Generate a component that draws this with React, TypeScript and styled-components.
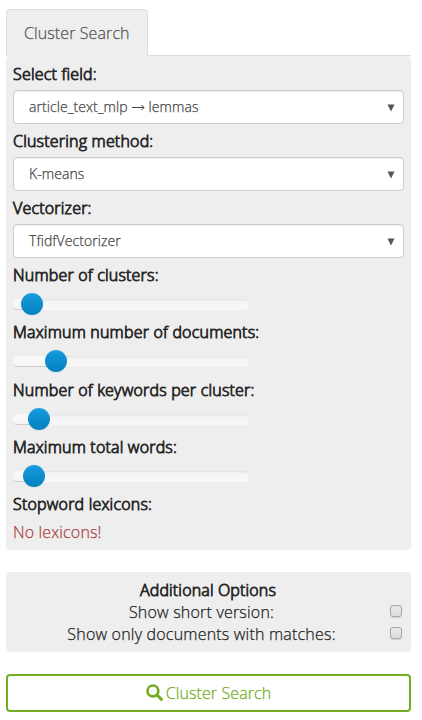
import React from 'react';
import styled, { createGlobalStyle } from 'styled-components';

const GlobalStyle = createGlobalStyle`
  * { box-sizing: border-box; }
  body {
    margin: 0;
    background: #fff;
    color: #222;
    font: 300 16px/22.86px "Open Sans", sans-serif;
    -webkit-text-stroke: 0.25px currentColor;
  }
`;

const Page = styled.main`
  width: 405px;
  margin-left: 6px;
  padding-top: 9px;
`;

const Tabs = styled.nav`
  display: flex;
  height: 47px;
  border-bottom: 1px solid #ddd;
`;

const Tab = styled.a`
  width: 142px;
  height: 47px;
  padding: 12px 17px;
  border: 1px solid #ddd;
  border-bottom-color: #eee;
  border-radius: 4px 4px 0 0;
  background: #eee;
  color: #555;
  letter-spacing: 0.1px;
`;

const Panel = styled.section`
  border-radius: 4px;
  background: #eee;
  box-shadow: 0 1px 2px rgba(0, 0, 0, 0.07);
`;

const Form = styled(Panel)`
  height: 493px;
  padding: 1px 7px 0;
`;

const Label = styled.div`
  height: 33px;
  padding-top: 6px;
  color: #2a2a2a;
  letter-spacing: 0.2px;
  -webkit-text-stroke: 0.85px #2a2a2a;
  white-space: nowrap;
`;

const SelectBox = styled.div`
  display: flex;
  align-items: center;
  justify-content: space-between;
  width: 391px;
  height: 34px;
  padding: 0 8px 0 15px;
  border: 1px solid #ccc;
  border-radius: 4px;
  background: #fff;
  box-shadow: inset 0 1px 1px rgba(0, 0, 0, 0.075);
  color: #444;
  font-size: 14px;
  letter-spacing: 0.06px;
`;

const LongArrow = styled.svg`
  width: 13px;
  height: 7px;
  margin: 0 4px 1px;
  fill: none;
  stroke: currentColor;
`;

const Arrow = styled.svg`
  width: 8px;
  height: 8px;
  margin-top: 1px;
  fill: #555;
`;

const SliderField = styled.div`
  height: 57.3px;
`;

const Track = styled.div`
  display: flex;
  align-items: center;
  width: 236px;
  height: 11px;
  margin-top: 8px;
  border-radius: 4px;
  background: linear-gradient(#f3f3f3, #f8f8f8);
  box-shadow: inset 0 1px 2px rgba(0, 0, 0, 0.08);
`;

const Selection = styled.div<{ $size: number }>`
  width: ${(p) => p.$size}px;
  height: 11px;
  border-radius: 4px;
  background: linear-gradient(#f9f9f9, #f5f5f5);
  box-shadow: inset 0 -1px 0 rgba(0, 0, 0, 0.15);
`;

const Handle = styled.div`
  flex: none;
  width: 22px;
  height: 22px;
  margin: -1px 0 0 -11px;
  border-radius: 50%;
  background: linear-gradient(#149bdf, #0480be);
  box-shadow: inset 0 1px 0 rgba(255, 255, 255, 0.1), 0 1px 2px rgba(0, 0, 0, 0.05);
`;

const Warning = styled.div`
  color: #a94442;
  letter-spacing: 0.15px;
  padding-top: 1px;
`;

const Options = styled(Panel)`
  height: 79px;
  margin-top: 23px;
  padding: 7px 8px 0 7px;
`;

const OptionsTitle = styled.div`
  height: 21px;
  text-align: center;
  color: #2a2a2a;
  letter-spacing: 0.15px;
  -webkit-text-stroke: 0.85px #2a2a2a;
`;

const Option = styled.label`
  display: grid;
  grid-template-columns: 1fr 13px;
  height: 22px;
  padding-top: 1px;
  text-align: center;
  letter-spacing: 0.2px;
`;

const Check = styled.input`
  appearance: none;
  width: 12px;
  height: 12px;
  margin: 4px 0 0;
  border: 1px solid #a9a9a9;
  border-radius: 3px;
  background: linear-gradient(#e9e9e9, #dcdcdc);
  box-shadow: 0 1px 1px rgba(0, 0, 0, 0.12);
`;

const SearchButton = styled.button`
  display: flex;
  align-items: center;
  justify-content: center;
  gap: 3px;
  width: 100%;
  height: 38px;
  margin-top: 23px;
  padding: 0;
  border: 2px solid #73ad21;
  border-radius: 4px;
  background: #fff;
  color: #73ad21;
  font: inherit;
  letter-spacing: 0.1px;
`;

const SearchIcon = styled.svg`
  width: 17px;
  height: 17px;
  margin-top: -2px;
`;

const selects = [
  {
    label: 'Select field:',
    value: (
      <>
        article_text_mlp
        <LongArrow viewBox="0 0 13 7">
          <path d="M0 3.5h12M9.5 1L12 3.5 9.5 6" />
        </LongArrow>
        lemmas
      </>
    ),
  },
  { label: 'Clustering method:', value: 'K-means' },
  { label: 'Vectorizer:', value: 'TfidfVectorizer' },
];

const sliders = [
  { label: 'Number of clusters:', offset: 19 },
  { label: 'Maximum number of documents:', offset: 43 },
  { label: 'Number of keywords per cluster:', offset: 26 },
  { label: 'Maximum total words:', offset: 21 },
];

export default function App() {
  return (
    <>
      <GlobalStyle />
      <Page>
        <Tabs>
          <Tab>Cluster Search</Tab>
        </Tabs>
        <Form>
          {selects.map((s) => (
            <div key={s.label}>
              <Label>{s.label}</Label>
              <SelectBox>
                <span>{s.value}</span>
                <Arrow viewBox="0 0 8 8">
                  <path d="M.5 .5h7L4 7.5z" />
                </Arrow>
              </SelectBox>
            </div>
          ))}
          {sliders.map((s) => (
            <SliderField key={s.label}>
              <Label>{s.label}</Label>
              <Track>
                <Selection $size={s.offset} />
                <Handle />
              </Track>
            </SliderField>
          ))}
          <Label>Stopword lexicons:</Label>
          <Warning>No lexicons!</Warning>
        </Form>
        <Options>
          <OptionsTitle>Additional Options</OptionsTitle>
          <Option>
            <span>Show short version:</span>
            <Check type="checkbox" />
          </Option>
          <Option>
            <span>Show only documents with matches:</span>
            <Check type="checkbox" />
          </Option>
        </Options>
        <SearchButton>
          <SearchIcon viewBox="0 0 16 16" fill="none" stroke="currentColor">
            <circle cx="6.5" cy="6.5" r="5.1" strokeWidth="2.5" />
            <path d="M10.3 10.3l4.2 4.2" strokeWidth="2.8" strokeLinecap="round" />
          </SearchIcon>
          Cluster Search
        </SearchButton>
      </Page>
    </>
  );
}
